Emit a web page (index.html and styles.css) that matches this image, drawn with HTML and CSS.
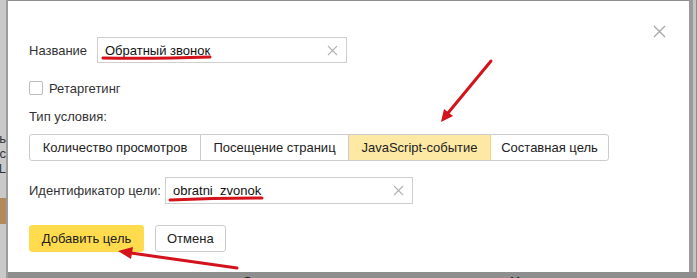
FILE: index.html
```html
<!DOCTYPE html>
<html lang="ru">
<head>
    <meta charset="UTF-8">
    <title>Новая цель</title>
    <link rel="stylesheet" href="styles.css">
</head>
<body>
    <div class="screen">
        <!-- page behind the dialog -->
        <div class="side-left">
            <span>ть</span>
            <span>ос</span>
            <span>L</span>
            <div class="side-block"></div>
        </div>

        <div class="modal">
            <svg class="close" width="13" height="13" viewBox="0 0 13 13">
                <path d="M1 1 L12 12 M12 1 L1 12" stroke="#a6a6a6" stroke-width="1.3" fill="none"/>
            </svg>

            <div class="row">
                <label class="label label-name">Название</label>
                <div class="input input-name">
                    <span class="value">Обратный звонок</span>
                    <svg class="clear" width="11" height="11" viewBox="0 0 11 11">
                        <path d="M1 1 L10 10 M10 1 L1 10" stroke="#b3b3b3" stroke-width="1.1" fill="none"/>
                    </svg>
                </div>
            </div>

            <div class="check-row">
                <span class="checkbox"></span>
                <span>Ретаргетинг</span>
            </div>

            <div class="type-title">Тип условия:</div>

            <div class="segments">
                <div class="seg seg-1">Количество просмотров</div>
                <div class="seg seg-2">Посещение страниц</div>
                <div class="seg seg-3 active">JavaScript-событие</div>
                <div class="seg seg-4">Составная цель</div>
            </div>

            <div class="row row-id">
                <label class="label label-id">Идентификатор цели:</label>
                <div class="input input-id">
                    <span class="value">obratni_zvonok</span>
                    <svg class="clear" width="11" height="11" viewBox="0 0 11 11">
                        <path d="M1 1 L10 10 M10 1 L1 10" stroke="#b3b3b3" stroke-width="1.1" fill="none"/>
                    </svg>
                </div>
            </div>

            <div class="actions">
                <button class="btn btn-yellow">Добавить цель</button>
                <button class="btn">Отмена</button>
            </div>
        </div>

        <div class="side-right"></div>

        <div class="bottom">
            <span class="b1">Название цели</span>
            <span class="b2">Описание</span>
            <span class="b3">Номер цели</span>
        </div>

        <!-- red annotations drawn over the screenshot -->
        <svg class="notes" width="697" height="278" viewBox="0 0 697 278">
            <path d="M103 58 Q150 59 210 57" stroke="#d3121c" stroke-width="3" fill="none" stroke-linecap="round"/>
            <path d="M170 200 Q215 198 262 198" stroke="#d3121c" stroke-width="3" fill="none" stroke-linecap="round"/>
            <line x1="491" y1="61" x2="448" y2="113" stroke="#d3121c" stroke-width="3" stroke-linecap="round"/>
            <polygon points="441,122 453,116 444,109" fill="#d3121c"/>
            <line x1="237" y1="268" x2="131" y2="253" stroke="#d3121c" stroke-width="3" stroke-linecap="round"/>
            <polygon points="118,251 133,247 131,259" fill="#d3121c"/>
        </svg>
    </div>
</body>
</html>
```

FILE: styles.css
```css
body {
    margin: 0;
    font-family: "Liberation Sans", Arial, sans-serif;
    font-size: 13px;
    color: #222;
    overflow: hidden;
}

.screen {
    position: relative;
    width: 697px;
    height: 278px;
    background: #8e8e8e;
    display: flex;
    align-items: flex-start;
    overflow: hidden;
}

.side-left {
    width: 6px;
    height: 272px;
    border-right: 2px solid #9c9c9c;
    background: #c9c9c9;
    color: #333;
    font-size: 13px;
    overflow: hidden;
    display: flex;
    flex-direction: column;
    align-items: flex-end;
    padding-top: 131px;
    box-sizing: content-box;
    white-space: nowrap;
}

.side-left span {
    line-height: 15px;
    direction: rtl;
}

.side-block {
    width: 6px;
    height: 26px;
    margin-top: 22px;
    background: #b58a5a;
}

.modal {
    position: relative;
    width: 681px;
    height: 271px;
    margin-top: 1px;
    background: #fff;
    box-sizing: border-box;
    padding: 36px 0 0 21px;
}

.close {
    position: absolute;
    top: 24px;
    right: 23px;
}

.row {
    display: flex;
    align-items: center;
}

.label {
    color: #333;
}

.label-name {
    width: 68px;
}

.label-id {
    width: 136px;
}

.input {
    height: 26px;
    border: 1px solid #cfcfcf;
    box-sizing: border-box;
    display: flex;
    align-items: center;
    justify-content: space-between;
    padding: 0 7px 0 7px;
    color: #111;
    font-size: 13px;
}

.input-name {
    width: 250px;
}

.input-id {
    width: 248px;
    height: 27px;
}

.clear {
    margin-right: 1px;
}

.check-row {
    display: flex;
    align-items: center;
    margin-top: 19px;
    height: 12px;
    color: #333;
}

.checkbox {
    width: 12px;
    height: 12px;
    border: 1px solid #bdbdbd;
    border-radius: 2px;
    margin-right: 6px;
}

.type-title {
    margin-top: 15px;
    line-height: 16px;
    color: #333;
}

.segments {
    display: flex;
    margin-top: 9px;
    height: 27px;
    width: 580px;
    border: 1px solid #cccccc;
    border-radius: 3px;
    box-sizing: border-box;
    overflow: hidden;
}

.seg {
    display: flex;
    align-items: center;
    justify-content: center;
    border-right: 1px solid #cccccc;
    color: #222;
}

.seg-1 { width: 170px; }
.seg-2 { width: 147px; }
.seg-3 { width: 141px; }
.seg-4 { flex: 1; border-right: none; }

.seg.active {
    background: #fde9a4;
    border-right-color: #ecd28a;
}

.row-id {
    margin-top: 16px;
}

.actions {
    display: flex;
    gap: 11px;
    margin-top: 21px;
}

.btn {
    height: 27px;
    font-family: "Liberation Sans", Arial, sans-serif;
    font-size: 13px;
    color: #222;
    background: #fff;
    border: 1px solid #cccccc;
    border-radius: 3px;
    padding: 0 11px;
}

.btn-yellow {
    width: 115px;
    background: #ffdb4d;
    border-color: #ffdb4d;
}

.side-right {
    width: 4px;
    height: 272px;
    margin-left: 0;
    background: #9a9a9a;
    border-right: 3px solid #c4c4c4;
}

.bottom {
    position: absolute;
    left: 0;
    top: 272px;
    width: 697px;
    height: 6px;
    font-size: 14px;
    font-weight: bold;
    color: #222;
}

.bottom span {
    position: absolute;
    top: 2px;
    line-height: 16px;
}

.b1 { left: -22px; }
.b2 { left: 242px; }
.b3 { left: 510px; }

.notes {
    position: absolute;
    left: 0;
    top: 0;
    pointer-events: none;
}
```
